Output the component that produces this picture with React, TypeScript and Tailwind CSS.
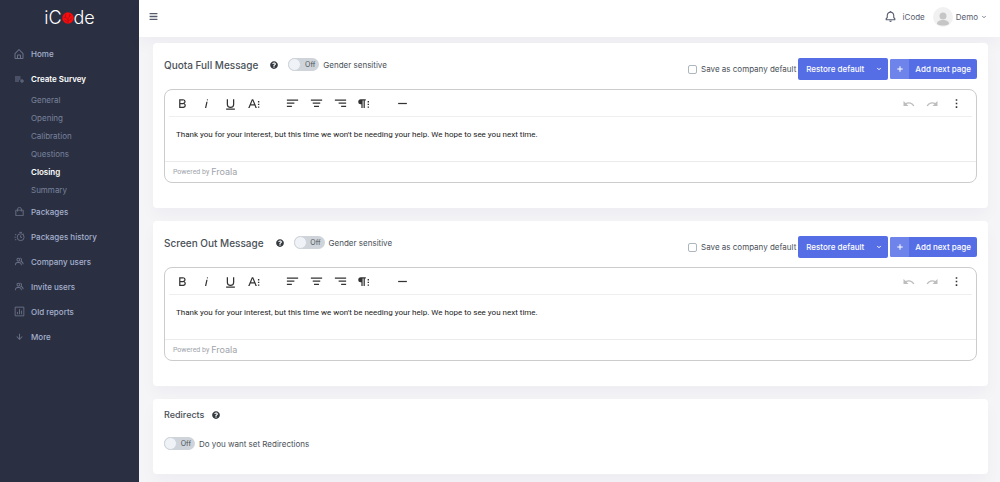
import React, { useState } from 'react'
import { BiBell, BiDownArrowAlt, BiGroup, BiHomeAlt, BiListPlus, BiShoppingBag } from 'react-icons/bi'
import { FaBars, FaQuestionCircle } from 'react-icons/fa'
import { ChevronDown, Plus } from 'lucide-react'

const surveySteps = ['General', 'Opening', 'Calibration', 'Questions', 'Closing', 'Summary']

function HistoryIcon({ className }: { className?: string }) {
  return (
    <svg viewBox="0 0 24 24" className={className} fill="none" stroke="currentColor" strokeWidth="2">
      <circle cx="14.5" cy="13.5" r="7.5" />
      <path d="M14.5 9.5v4.500h3M11.500 3h6M20 6l2 2M2 8h3M1 13.500h3M2 19h3" />
    </svg>
  )
}

function ReportIcon({ className }: { className?: string }) {
  return (
    <svg viewBox="0 0 24 24" className={className} fill="none" stroke="currentColor" strokeWidth="2">
      <path d="M2.500 2.500h19v19h-19ZM7.500 18v-5M12 18V7M16.500 18v-8" />
    </svg>
  )
}

const lowerNav = [
  { label: 'Packages', icon: BiShoppingBag },
  { label: 'Packages history', icon: HistoryIcon },
  { label: 'Company users', icon: BiGroup },
  { label: 'Invite users', icon: BiGroup },
  { label: 'Old reports', icon: ReportIcon },
  { label: 'More', icon: BiDownArrowAlt },
]

// 24x24 glyphs of the rich text toolbar
const glyphs = {
  bold: 'M15.25,11.8h0A3.68,3.68,0,0,0,17,9a3.93,3.93,0,0,0-3.86-4H6.65V19h7a3.74,3.74,0,0,0,3.7-3.78V15.1A3.64,3.64,0,0,0,15.25,11.8ZM8.65,7h4.2a2.09,2.09,0,0,1,2,1.3,2.09,2.09,0,0,1-1.37,2.61,2.23,2.23,0,0,1-.63.09H8.65Zm4.6,10H8.65V13h4.6a2.09,2.09,0,0,1,2,1.3,2.09,2.09,0,0,1-1.37,2.61A2.23,2.23,0,0,1,13.25,17Z',
  italic: 'M11.76,9h2l-2.2,10h-2Zm1.68-4a1,1,0,1,0,1,1,1,1,0,0,0-1-1Z',
  underline: 'M19,20v2H5V20ZM16,5v8a4,4,0,0,1-8,0V5H6v8a6,6,0,0,0,12,0V5Z',
  moreText: 'M13.55,19h2.27L9.94,5H7.78L1.9,19H4.15l1.5-3.78h6.42Zm-7-5.82L8.86,7.24l2.35,5.94ZM17.5,8h2.2v2.200h-2.200ZM17.500,12.300h2.200v2.200h-2.200ZM17.500,16.600h2.200v2.200h-2.200Z',
  alignLeft: 'M3,5.500h18v2H3ZM3,10.500h12v2H3ZM3,15.500h8v2H3Z',
  alignCenter: 'M3,5.500h18v2H3ZM6,10.500h12v2H6ZM8,15.500h8v2H8Z',
  alignRight: 'M3,5.500h18v2H3ZM9,10.500h12v2H9ZM13,15.500h8v2h-8Z',
  moreParagraph: 'M6,5a4,4,0,0,0,0,8h1v6h2V7h1.500v12h2V7H14V5ZM17,8h2.200v2.200H17ZM17,12.300h2.200v2.200H17ZM17,16.600h2.200v2.200H17Z',
  line: 'M5,11h14v2H5Z',
  undo: 'M4,8v8h8L8.800,12.800a8,8,0,0,1,10.700,3.700l2-.8A10,10,0,0,0,7.300,11.300Z',
  redo: 'M20,8v8h-8l3.200-3.200A8,8,0,0,0,4.500,16.500l-2-.8A10,10,0,0,1,16.700,11.300Z',
  more: 'M10.750,5h2.500v2.500h-2.500ZM10.750,10.750h2.500v2.500h-2.500ZM10.750,16.500h2.500V19h-2.500Z',
}

type Glyph = keyof typeof glyphs

function ToolButton({ glyph, label, disabled }: { glyph: Glyph; label: string; disabled?: boolean }) {
  return (
    <button
      type="button"
      aria-label={label}
      disabled={disabled}
      className="flex h-6 w-6 items-center justify-center text-[#333333] disabled:text-[#bdbdbd]"
    >
      <svg viewBox="0 0 24 24" className="h-[15px] w-[15px]" fill="currentColor">
        <path d={glyphs[glyph]} />
      </svg>
    </button>
  )
}

function Switch({ label }: { label: string }) {
  const [on, setOn] = useState(false)
  return (
    <label className="relative flex items-center gap-1 text-[8px] leading-3 text-[#495057]">
      <input
        type="checkbox"
        role="switch"
        className="sr-only"
        checked={on}
        onChange={(e) => setOn(e.target.checked)}
      />
      <span
        className={`flex h-[13px] w-[31px] items-center justify-between rounded-full bg-[#ced4da] pr-1 text-[7px] ${
          on ? 'flex-row-reverse' : ''
        }`}
      >
        <span className="h-[13px] w-[13px] rounded-full border border-[#ced4da] bg-[#eff2f7]" />
        {on ? 'On' : 'Off'}
      </span>
      {label}
    </label>
  )
}

function Help() {
  return (
    <button type="button" aria-label="Help" className="text-[#343a40]">
      <FaQuestionCircle className="h-2 w-2" />
    </button>
  )
}

function Editor() {
  return (
    <div className="mt-[9px] rounded-lg border border-[#cccccc]">
      <div className="mx-1 flex h-[27px] items-center justify-between border-b border-[#efefef] pr-1 pl-px">
        <div className="flex gap-3.5">
          <div className="flex">
            <ToolButton glyph="bold" label="Bold" />
            <ToolButton glyph="italic" label="Italic" />
            <ToolButton glyph="underline" label="Underline" />
            <ToolButton glyph="moreText" label="More text" />
          </div>
          <div className="flex">
            <ToolButton glyph="alignLeft" label="Align left" />
            <ToolButton glyph="alignCenter" label="Align center" />
            <ToolButton glyph="alignRight" label="Align right" />
            <ToolButton glyph="moreParagraph" label="More paragraph" />
          </div>
          <ToolButton glyph="line" label="Insert horizontal line" />
        </div>
        <div className="flex">
          <ToolButton glyph="undo" label="Undo" disabled />
          <ToolButton glyph="redo" label="Redo" disabled />
          <ToolButton glyph="more" label="More misc" />
        </div>
      </div>
      <div
        role="textbox"
        aria-label="Message"
        contentEditable
        suppressContentEditableWarning
        className="h-11 px-[11px] pt-3 font-['Roboto',sans-serif] text-[8px] leading-3 text-[#222222] outline-none"
      >
        <p>Thank you for your interest, but this time we won't be needing your help. We hope to see you next time.</p>
      </div>
      <div className="flex h-[21px] items-center gap-0.5 border-t border-[#ebebeb] px-2 text-[#a0a3ab]">
        <span className="font-['Roboto',sans-serif] text-[7px]">Powered by</span>
        <span className="text-[9px] leading-3">Froala</span>
      </div>
    </div>
  )
}

function Card({ children }: { children: React.ReactNode }) {
  return (
    <section className="rounded-sm bg-white px-[11px] shadow-[0_8px_16px_rgba(18,38,63,0.03)]">{children}</section>
  )
}

function MessageCard({ title }: { title: string }) {
  return (
    <Card>
      <div className="flex items-start justify-between pt-[15px] pb-0">
        <div className="flex items-center">
          <h2 className="mr-3 text-[10px] leading-3 font-medium text-[#495057]">{title}</h2>
          <Help />
          <div className="ml-2.5">
            <Switch label="Gender sensitive" />
          </div>
        </div>
        <div className="flex h-[22px] items-center">
          <label className="mr-0.5 flex items-center gap-1 text-[8px] leading-3 text-[#495057]">
            <input
              type="checkbox"
              className="h-[9px] w-[9px] appearance-none rounded-xs border border-[#adb5bd] bg-white checked:bg-[#556ee6]"
            />
            Save as company default
          </label>
          <div className="mr-0.5 flex h-[22px] rounded-xs bg-[#556ee6] text-[8px] text-white">
            <button type="button" className="pr-1.5 pl-2 font-medium">
              Restore default
            </button>
            <button type="button" aria-label="More restore options" className="px-1.5">
              <ChevronDown className="h-1.5 w-1.5" strokeWidth={4} />
            </button>
          </div>
          <button
            type="button"
            className="flex h-5 items-center overflow-hidden rounded-xs bg-[#556ee6] text-[8px] font-medium text-white"
          >
            <span className="flex h-full w-[19px] items-center justify-center bg-[#6f84ea]">
              <Plus className="h-2 w-2" strokeWidth={3} />
            </span>
            <span className="px-1.5">Add next page</span>
          </button>
        </div>
      </div>
      <Editor />
      <div className="h-[25px]" />
    </Card>
  )
}

function Logo() {
  return (
    <a
      href="#"
      aria-label="iCode"
      className="flex h-[41px] items-center justify-center pb-1.5 text-[18px] leading-5 font-light text-white"
    >
      iC
      <svg viewBox="0 0 24 24" className="h-3 w-3" fill="none">
        <circle cx="12" cy="12" r="11.500" fill="#fb0a0a" />
        <path
          d="M12 23V13l6-7M12 15l-6-6M12 18l8-5M7 10V4M8 11H3M15 10V4M12 20l-7-4"
          stroke="#8a1620"
          strokeWidth="1.200"
        />
      </svg>
      de
    </a>
  )
}

function Sidebar() {
  return (
    <aside className="w-[139px] shrink-0 bg-[#2a3042] text-[8px]">
      <Logo />
      <nav className="font-medium text-[#a6b0cf]">
        <a href="#" className="flex h-[25px] items-center gap-1.5 pl-[13px]">
          <BiHomeAlt className="h-3 w-3 text-[#6a7187]" />
          Home
        </a>
        <a href="#" className="flex h-[25px] items-center gap-1.5 pl-[13px] font-semibold text-white">
          <BiListPlus className="h-3 w-3 text-[#6a7187]" />
          Create Survey
        </a>
        <ul className="font-normal text-[#79829c]">
          {surveySteps.map((step) => (
            <li key={step}>
              <a
                href="#"
                className={`flex h-[18px] items-center pl-[31px] ${step === 'Closing' ? 'font-semibold text-white' : ''}`}
              >
                {step}
              </a>
            </li>
          ))}
        </ul>
        {lowerNav.map(({ label, icon: Icon }) => (
          <a key={label} href="#" className="flex h-[25px] items-center gap-1.5 pl-[13px]">
            <span className="flex w-3 justify-center text-[#6a7187]">
              <Icon className="h-[11px] w-[11px]" />
            </span>
            {label}
          </a>
        ))}
      </nav>
    </aside>
  )
}

function Topbar() {
  return (
    <header className="flex h-[37px] items-center justify-between bg-white pr-[13px] pb-1 pl-2.5 text-[8px] text-[#555b6d] shadow-[0_8px_16px_rgba(18,38,63,0.03)]">
      <button type="button" aria-label="Toggle menu">
        <FaBars className="h-[9px] w-[9px]" />
      </button>
      <div className="flex items-center">
        <button type="button" aria-label="Notifications" className="mr-1.5">
          <BiBell className="h-[13px] w-[13px]" />
        </button>
        <span className="mr-2">iCode</span>
        <button type="button" className="flex items-center gap-[3px]">
          <svg viewBox="0 0 20 20" className="h-5 w-5">
            <circle cx="10" cy="10" r="10" fill="#f1f1f1" />
            <circle cx="10" cy="9" r="3.500" fill="#c6c6c6" />
            <path d="M4 17c0-3 3-4 6-4s6 1 6 4c-3 2-9 2-12 0Z" fill="#c6c6c6" />
          </svg>
          Demo
          <ChevronDown className="h-1.5 w-1.5" strokeWidth={3} />
        </button>
      </div>
    </header>
  )
}

export default function App() {
  return (
    <div className="flex min-h-screen bg-[#f5f5f8] font-['Inter',sans-serif]">
      <Sidebar />
      <div className="min-w-0 flex-1">
        <Topbar />
        <main className="flex flex-col gap-[13px] pt-1.5 pr-3 pb-[7px] pl-3.5">
          <MessageCard title="Quota Full Message" />
          <MessageCard title="Screen Out Message" />
          <Card>
            <div className="flex items-center gap-2 pt-2.5">
              <h2 className="text-[9px] leading-3 font-medium text-[#495057]">Redirects</h2>
              <Help />
            </div>
            <div className="flex pt-4 pb-6">
              <Switch label="Do you want set Redirections" />
            </div>
          </Card>
        </main>
      </div>
    </div>
  )
}
